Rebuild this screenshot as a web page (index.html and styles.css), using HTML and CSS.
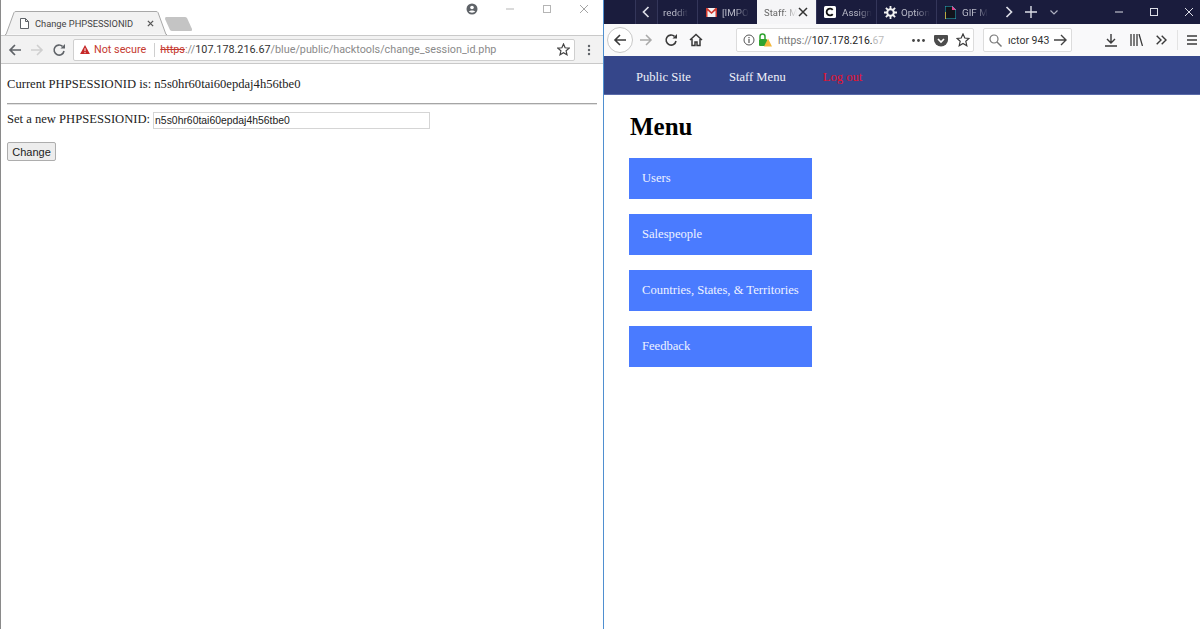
FILE: index.html
```html
<!DOCTYPE html>
<html lang="en">
<head>
    <meta charset="UTF-8">
    <meta name="viewport" content="width=device-width, initial-scale=1.0">
    <title>Change PHPSESSIONID</title>
    <link rel="stylesheet" href="styles.css">
</head>
<body>
    <div class="desktop">
        <!-- chrome window -->
        <section class="chrome">
            <div class="chrome-title">
                <div class="chrome-tab">
                    <svg class="tab-shape" width="162" height="24" viewBox="0 0 162 24"><path d="M0 23.500H1L9 1.500Q9.500 .5 11 .5H151Q152.500 .5 153 1.500L161 23.500H162" fill="#f2f2f2" stroke="#a8a8a8"/></svg>
                    <svg class="tab-doc" width="9" height="11" viewBox="0 0 9 11"><path d="M.5 .5H5.500L8.500 3.500V10.500H.5ZM5.500 .5V3.500H8.500" fill="#fff" stroke="#5f6368"/></svg>
                    <span class="tab-label">Change PHPSESSIONID</span>
                    <svg class="tab-x" width="7" height="7" viewBox="0 0 8 8"><path d="M1 1L7 7M7 1L1 7" stroke="#555" stroke-width="1.500"/></svg>
                </div>
                <svg class="ghost-tab" width="28" height="14" viewBox="0 0 28 14"><path d="M1 0H20Q21 0 22 1L27 12Q27.500 14 26 14H7Q6 14 5 13L0 2Q0 0 1 0Z" fill="#c4c4c4"/></svg>
                <div class="chrome-controls">
                    <svg class="profile" width="12" height="12" viewBox="0 0 12 12"><circle cx="6" cy="6" r="5.500" fill="#5f6368"/><circle cx="6" cy="4.500" r="1.800" fill="#fff"/><path d="M2.800 8.600C4 7 8 7 9.200 8.600C8 10 4 10 2.800 8.600Z" fill="#fff"/></svg>
                    <svg class="win-btn" width="10" height="10" viewBox="0 0 10 10"><path d="M1 5H9" stroke="#b5b5b5"/></svg>
                    <svg class="win-btn" width="10" height="10" viewBox="0 0 10 10"><rect x="1.500" y="1.500" width="7" height="7" fill="none" stroke="#b5b5b5"/></svg>
                    <svg class="win-btn" width="10" height="10" viewBox="0 0 10 10"><path d="M1 1L9 9M9 1L1 9" stroke="#a5a5a5"/></svg>
                </div>
            </div>
            <div class="chrome-bar">
                <svg width="14" height="14" viewBox="0 0 14 14"><path d="M13 7H2M7 2L2 7L7 12" fill="none" stroke="#5f6368" stroke-width="1.600"/></svg>
                <svg class="fwd" width="14" height="14" viewBox="0 0 14 14"><path d="M1 7H12M7 2L12 7L7 12" fill="none" stroke="#cfcfcf" stroke-width="1.600"/></svg>
                <svg class="reload" width="14" height="14" viewBox="0 0 14 14"><path d="M12 8A5 5 0 1 1 10.500 3.400" fill="none" stroke="#5f6368" stroke-width="1.600"/><path d="M8.500 5.500H13V1Z" fill="#5f6368"/></svg>
                <div class="chrome-omni">
                    <svg class="warn" width="10" height="9" viewBox="0 0 12 11"><path d="M6 0L12 11H0Z" fill="#c62828"/><path d="M6 4V7.500M6 8.500V10" stroke="#fff" stroke-width="1.200"/></svg>
                    <span class="not-secure">Not secure</span>
                    <span class="omni-sep"></span>
                    <span class="url"><s class="scheme">https</s><span class="url-dim">://</span>107.178.216.67<span class="url-dim">/blue/public/hacktools/change_session_id.php</span></span>
                    <svg class="omni-star" width="13" height="13" viewBox="0 0 13 13"><path d="M6.500 1L8.100 4.800L12.200 5.100L9.100 7.800L10 11.800L6.500 9.700L3 11.800L3.900 7.800L.8 5.100L4.900 4.800Z" fill="none" stroke="#444" stroke-width="1.200"/></svg>
                </div>
                <svg class="dots" width="4" height="12" viewBox="0 0 4 12"><circle cx="2" cy="2" r="1.200" fill="#5f6368"/><circle cx="2" cy="6" r="1.200" fill="#5f6368"/><circle cx="2" cy="10" r="1.200" fill="#5f6368"/></svg>
            </div>
            <div class="chrome-page">
                <p class="current">Current PHPSESSIONID is: n5s0hr60tai60epdaj4h56tbe0</p>
                <hr class="rule">
                <form class="session-form">
                    <div class="session-row">
                        <label for="session-id">Set a new PHPSESSIONID:</label>
                        <input type="text" id="session-id" value="n5s0hr60tai60epdaj4h56tbe0">
                    </div>
                    <button type="button" class="change-btn">Change</button>
                </form>
            </div>
        </section>

        <!-- firefox window -->
        <section class="firefox">
            <div class="ff-tabs">
                <div class="ff-tab ff-scroll">
                    <svg width="8" height="12" viewBox="0 0 8 12"><path d="M6.500 1L1.500 6L6.500 11" fill="none" stroke="#dcdde6" stroke-width="1.700"/></svg>
                </div>
                <div class="ff-tab ff-reddit"><span class="ff-fade">reddit</span></div>
                <div class="ff-tab ff-mail">
                    <svg width="11" height="9" viewBox="0 0 11 9"><rect width="11" height="9" fill="#f4f4f4"/><path d="M0 0H1.500L5.500 4L9.500 0H11V9H9.500V2.500L5.500 6L1.500 2.500V9H0Z" fill="#d0392e"/></svg>
                    <span class="ff-fade">[IMPO</span>
                </div>
                <div class="ff-tab ff-active">
                    <span class="active-label">Staff: M</span>
                    <svg width="10" height="10" viewBox="0 0 10 10"><path d="M1 1L9 9M9 1L1 9" stroke="#333" stroke-width="1.500"/></svg>
                </div>
                <div class="ff-tab ff-assign">
                    <svg width="12" height="12" viewBox="0 0 12 12"><rect width="12" height="12" rx="1.500" fill="#fff"/><path d="M8.700 3.900A3.400 3.400 0 1 0 8.700 8.100" fill="none" stroke="#111" stroke-width="1.800"/></svg>
                    <span class="ff-fade">Assign</span>
                </div>
                <div class="ff-tab ff-opt">
                    <svg width="13" height="13" viewBox="0 0 13 13"><circle cx="6.500" cy="6.500" r="3.300" fill="none" stroke="#f2f2f2" stroke-width="2"/><path d="M6.500 0V3M6.500 10V13M0 6.500H3M10 6.500H13M1.900 1.900L4 4M9 9L11.100 11.100M11.100 1.900L9 4M4 9L1.900 11.100" stroke="#f2f2f2" stroke-width="1.800"/></svg>
                    <span class="ff-fade">Option</span>
                </div>
                <div class="ff-tab ff-gif">
                    <svg width="11" height="13" viewBox="0 0 11 13"><path d="M0 0H7L11 4V13H0Z" fill="#12131c" stroke="#28b6c9"/><path d="M7 0L11 4H7Z" fill="#e8418b"/><path d="M0 13V6" stroke="#f0c330" stroke-width="1.500"/></svg>
                    <span class="ff-fade">GIF M</span>
                </div>
                <div class="ff-tabctl">
                    <svg width="8" height="12" viewBox="0 0 8 12"><path d="M1.500 1L6.500 6L1.500 11" fill="none" stroke="#dcdde6" stroke-width="1.700"/></svg>
                    <svg class="ff-plus" width="12" height="12" viewBox="0 0 12 12"><path d="M6 0V12M0 6H12" stroke="#dcdde6" stroke-width="1.400"/></svg>
                    <svg class="ff-more" width="8" height="5" viewBox="0 0 8 5"><path d="M.5 .5L4 4L7.500 .5" fill="none" stroke="#aeb0c0" stroke-width="1.200"/></svg>
                </div>
                <div class="ff-controls">
                    <svg width="10" height="10" viewBox="0 0 10 10"><path d="M1 5H9" stroke="#dcdde6"/></svg>
                    <svg width="10" height="10" viewBox="0 0 10 10"><rect x="1.500" y="1.500" width="7" height="7" fill="none" stroke="#dcdde6"/></svg>
                    <svg width="10" height="10" viewBox="0 0 10 10"><path d="M1 1L9 9M9 1L1 9" stroke="#dcdde6"/></svg>
                </div>
            </div>
            <div class="ff-bar">
                <span class="ff-back">
                    <svg width="14" height="14" viewBox="0 0 14 14"><path d="M13 7H2M7 2L2 7L7 12" fill="none" stroke="#3a3a3a" stroke-width="1.600"/></svg>
                </span>
                <svg class="ff-fwd" width="14" height="14" viewBox="0 0 14 14"><path d="M1 7H12M7 2L12 7L7 12" fill="none" stroke="#a9a9a9" stroke-width="1.500"/></svg>
                <svg class="ff-reload" width="14" height="14" viewBox="0 0 14 14"><path d="M12 8A5 5 0 1 1 10.500 3.400" fill="none" stroke="#3a3a3a" stroke-width="1.600"/><path d="M8.500 5.500H13V1Z" fill="#3a3a3a"/></svg>
                <svg class="ff-home" width="14" height="14" viewBox="0 0 14 14"><path d="M1 7L7 1.500L13 7M3 6V12.500H6V9H8V12.500H11V6" fill="none" stroke="#3a3a3a" stroke-width="1.500"/></svg>
                <div class="ff-url">
                    <svg width="12" height="12" viewBox="0 0 12 12"><circle cx="6" cy="6" r="5" fill="none" stroke="#555"/><path d="M6 5V9M6 3V4.200" stroke="#555" stroke-width="1.200"/></svg>
                    <svg class="ff-lock" width="13" height="14" viewBox="0 0 13 14"><path d="M1 6V3.500A2.500 2.500 0 0 1 6 3.500V6" fill="none" stroke="#2fa32f" stroke-width="1.500"/><rect x="0" y="6" width="8" height="7" rx="1" fill="#2fa32f"/><path d="M9 5.500L13 13.500H5Z" fill="#f3b73b"/></svg>
                    <span class="ff-address"><span class="ff-dim">https://</span>107.178.216.<span class="ff-dim2">67</span></span>
                    <svg class="ff-ellipsis" width="13" height="3" viewBox="0 0 13 3"><circle cx="1.500" cy="1.500" r="1.400" fill="#444"/><circle cx="6.500" cy="1.500" r="1.400" fill="#444"/><circle cx="11.500" cy="1.500" r="1.400" fill="#444"/></svg>
                    <svg class="ff-pocket" width="14" height="13" viewBox="0 0 14 13"><path d="M1 1H13Q14 1 14 2V6A7 6.500 0 0 1 0 6V2Q0 1 1 1Z" fill="#4c4c4c"/><path d="M4 5L7 8L10 5" fill="none" stroke="#fff" stroke-width="1.700"/></svg>
                    <svg class="ff-star" width="14" height="14" viewBox="0 0 14 14"><path d="M7 1L8.800 5L13 5.400L9.800 8.300L10.800 12.700L7 10.400L3.200 12.700L4.200 8.300L1 5.400L5.200 5Z" fill="none" stroke="#3a3a3a" stroke-width="1.200"/></svg>
                </div>
                <div class="ff-search">
                    <svg width="13" height="13" viewBox="0 0 13 13"><circle cx="5" cy="5" r="4" fill="none" stroke="#777" stroke-width="1.200"/><path d="M8 8L12.500 12.500" stroke="#777" stroke-width="1.400"/></svg>
                    <span class="ff-query">ıctor 943</span>
                    <svg class="ff-go" width="13" height="12" viewBox="0 0 13 12"><path d="M0 6H12M7 1L12 6L7 11" fill="none" stroke="#444" stroke-width="1.400"/></svg>
                </div>
                <div class="ff-tools">
                    <svg width="12" height="13" viewBox="0 0 12 13"><path d="M6 0V9M2 5L6 9L10 5M0 12H12" fill="none" stroke="#3a3a3a" stroke-width="1.400"/></svg>
                    <svg width="13" height="12" viewBox="0 0 13 12"><path d="M1 0V12M4 0V12M7 0V12M9 0L12.500 12" stroke="#3a3a3a" stroke-width="1.300"/></svg>
                    <svg width="11" height="10" viewBox="0 0 11 10"><path d="M.7 .7L5 5L.7 9.300M5.700 .7L10 5L5.700 9.300" fill="none" stroke="#3a3a3a" stroke-width="1.400"/></svg>
                    <span class="ff-sep"></span>
                    <svg width="10" height="10" viewBox="0 0 10 10"><path d="M0 1H10M0 5H10M0 9H10" stroke="#3a3a3a" stroke-width="1.300"/></svg>
                </div>
            </div>
            <nav class="site-nav">
                <a href="#">Public Site</a>
                <a href="#">Staff Menu</a>
                <a href="#" class="logout">Log out</a>
            </nav>
            <main class="site-main">
                <h1>Menu</h1>
                <ul class="menu-list">
                    <li><a href="#">Users</a></li>
                    <li><a href="#">Salespeople</a></li>
                    <li><a href="#">Countries, States, &amp; Territories</a></li>
                    <li><a href="#">Feedback</a></li>
                </ul>
            </main>
        </section>
    </div>
</body>
</html>
```

FILE: styles.css
```css
html, body {
    margin: 0;
    height: 100%;
    overflow: hidden;
}

svg {
    flex: none;
}

.desktop {
    display: flex;
    width: 1200px;
    height: 629px;
    background-color: #fff;
}

/* chrome window */

.chrome {
    width: 603px;
    flex: none;
    box-sizing: border-box;
    border-left: 1px solid #8a8a8a;
    display: flex;
    flex-direction: column;
    font-family: Roboto, "Noto Sans", sans-serif;
}

.chrome-title {
    height: 35px;
    display: flex;
    align-items: flex-end;
    padding-left: 4px;
    box-sizing: border-box;
}

.chrome-tab {
    position: relative;
    width: 162px;
    height: 24px;
    flex: none;
    display: flex;
    align-items: center;
    padding-left: 15px;
    box-sizing: border-box;
    font-size: 9.300px;
    color: #444;
}

.tab-shape {
    position: absolute;
    left: 0;
    top: 0;
}

.tab-doc, .tab-label, .tab-x {
    position: relative;
}

.tab-label {
    width: 106px;
    margin-left: 6px;
    white-space: nowrap;
}

.tab-x {
    margin-left: 6px;
}

.ghost-tab {
    margin: 0 0 4px -2px;
}

.chrome-controls {
    display: flex;
    align-items: center;
    align-self: flex-start;
    margin-left: auto;
    height: 18px;
}

.profile {
    margin-right: 27px;
}

.win-btn {
    margin-right: 27px;
}

.win-btn:last-child {
    margin-right: 14px;
}

.chrome-bar {
    height: 29px;
    background-color: #f2f2f2;
    border-top: 1px solid #c9c9c9;
    border-bottom: 1px solid #c9c9c9;
    box-sizing: border-box;
    display: flex;
    align-items: center;
    padding-left: 7px;
}

.fwd {
    margin-left: 8px;
}

.reload {
    margin-left: 8px;
}

.chrome-omni {
    width: 502px;
    height: 22px;
    box-sizing: border-box;
    margin-left: 7px;
    background-color: #fff;
    border: 1px solid #cfcfcf;
    border-radius: 2px;
    display: flex;
    align-items: center;
    padding-left: 6px;
    font-size: 10.800px;
    white-space: nowrap;
}

.not-secure {
    color: #c5392f;
    margin-left: 4px;
}

.omni-sep {
    width: 1px;
    height: 14px;
    background-color: #cfcfcf;
    margin: 0 5px 0 8px;
}

.url {
    color: #333;
}

.scheme {
    color: #c5392f;
}

.url-dim {
    color: #8a8a8a;
}

.omni-star {
    margin-left: auto;
    margin-right: 4px;
}

.dots {
    margin-left: 12px;
}

.chrome-page {
    padding: 12px 6px 0;
    font-family: "Liberation Serif", serif;
    font-size: 12.600px;
    color: #222;
}

.current {
    margin: 0;
    line-height: 16px;
}

.rule {
    margin: 11px 0 0;
    border: 0;
    border-top: 1px solid #a5a5a5;
    border-bottom: 1px solid #e2e2e2;
}

.session-row {
    display: flex;
    align-items: center;
    margin-top: 6px;
    height: 18px;
}

.session-row label {
    padding-bottom: 1px;
}

.session-row input {
    width: 277px;
    height: 17px;
    box-sizing: border-box;
    margin-left: 3px;
    padding: 0 1px;
    border: 1px solid #d5d5d5;
    font-family: "Liberation Sans", sans-serif;
    font-size: 10.400px;
    color: #222;
}

.change-btn {
    display: block;
    width: 49px;
    height: 19px;
    margin-top: 13px;
    padding: 0;
    border: 1px solid #adadad;
    border-radius: 2px;
    background-color: #ededed;
    font-family: "Liberation Sans", sans-serif;
    font-size: 11px;
    color: #222;
}

/* firefox window */

.firefox {
    flex: 1;
    border-left: 1px solid #4f8fd0;
    display: flex;
    flex-direction: column;
}

.ff-tabs {
    height: 24px;
    background-color: #1a1c3d;
    display: flex;
    font-family: Roboto, "Noto Sans", sans-serif;
    font-size: 9.800px;
    color: #c9cad6;
}

.ff-tab {
    display: flex;
    align-items: center;
    box-sizing: border-box;
    border-left: 1px solid #34365a;
    white-space: nowrap;
    flex: none;
}

.ff-scroll {
    width: 22px;
    margin-left: 31px;
    padding-left: 6px;
    background-color: #1f2040;
}

.ff-reddit {
    width: 40px;
    padding-left: 5px;
}

.ff-mail {
    width: 60px;
    padding-left: 8px;
}

.ff-mail span {
    margin-left: 5px;
}

.ff-active {
    width: 59px;
    padding-left: 7px;
    background-color: #f5f5f7;
    color: #666;
    border-left: 0;
    font-size: 9.500px;
}

.active-label {
    width: 33px;
    -webkit-mask-image: linear-gradient(to right, #000 60%, transparent);
    mask-image: linear-gradient(to right, #000 60%, transparent);
}

.active-label + svg {
    margin-left: 1px;
}

.ff-assign {
    width: 60px;
    padding-left: 7px;
}

.ff-assign span {
    margin-left: 6px;
}

.ff-opt {
    width: 60px;
    padding-left: 7px;
}

.ff-opt span {
    margin-left: 4px;
}

.ff-gif {
    width: 60px;
    padding-left: 8px;
}

.ff-gif span {
    margin-left: 6px;
}

.ff-fade {
    opacity: .9;
    -webkit-mask-image: linear-gradient(to right, #000 50%, transparent);
    mask-image: linear-gradient(to right, #000 50%, transparent);
}

.ff-tabctl {
    display: flex;
    align-items: center;
    padding-left: 9px;
}

.ff-plus {
    margin-left: 12px;
}

.ff-more {
    margin-left: 13px;
}

.ff-controls {
    display: flex;
    align-items: center;
    margin-left: auto;
    gap: 25px;
    padding-right: 6px;
}

.ff-bar {
    height: 32px;
    background-color: #f9f9fa;
    display: flex;
    align-items: center;
    padding-left: 3px;
    box-sizing: border-box;
    font-family: Roboto, "Noto Sans", sans-serif;
}

.ff-back {
    width: 26px;
    height: 26px;
    flex: none;
    box-sizing: border-box;
    border: 1px solid #c8c8c8;
    border-radius: 50%;
    background-color: #fff;
    display: flex;
    align-items: center;
    justify-content: center;
}

.ff-fwd {
    margin-left: 6px;
}

.ff-reload {
    margin-left: 11px;
}

.ff-home {
    margin-left: 11px;
}

.ff-url {
    width: 238px;
    height: 24px;
    flex: none;
    box-sizing: border-box;
    margin-left: 33px;
    background-color: #fff;
    border: 1px solid #dcdcdc;
    border-radius: 2px;
    display: flex;
    align-items: center;
    padding: 0 4px 0 6px;
    font-size: 10.400px;
}

.ff-lock {
    margin-left: 4px;
}

.ff-address {
    margin-left: 6px;
    color: #222;
    white-space: nowrap;
    width: 106px;
    flex: none;
}

.ff-dim {
    color: #777;
}

.ff-dim2 {
    color: #bbb;
}

.ff-ellipsis {
    margin-left: 28px;
}

.ff-pocket {
    margin-left: 9px;
}

.ff-star {
    margin-left: 8px;
}

.ff-search {
    width: 89px;
    height: 24px;
    flex: none;
    box-sizing: border-box;
    margin-left: 9px;
    background-color: #fff;
    border: 1px solid #dcdcdc;
    border-radius: 2px;
    display: flex;
    align-items: center;
    padding: 0 4px 0 5px;
    font-size: 10.500px;
    color: #333;
}

.ff-query {
    margin-left: 6px;
    white-space: nowrap;
}

.ff-go {
    margin-left: auto;
}

.ff-tools {
    display: flex;
    align-items: center;
    margin-left: 33px;
    gap: 13px;
}

.ff-sep {
    width: 1px;
    height: 20px;
    background-color: #e3e3e3;
    margin: 0 -4px 0 -3px;
}

.site-nav {
    height: 39px;
    background-color: #35468a;
    border-bottom: 1px solid #5a6aa8;
    box-sizing: border-box;
    display: flex;
    align-items: center;
    padding: 4px 0 0 32px;
    gap: 38px;
    font-family: "Liberation Serif", serif;
    font-size: 12.600px;
}

.site-nav a {
    color: #eef0f8;
    text-decoration: none;
}

.site-nav .logout {
    color: #e8112d;
    margin-left: -1px;
}

.site-main {
    padding: 18px 0 0 25px;
    font-family: "Liberation Serif", serif;
}

.site-main h1 {
    margin: 0;
    padding-left: 1px;
    font-size: 25px;
    line-height: 28px;
    color: #000;
}

.menu-list {
    list-style: none;
    margin: 17px 0 0;
    padding: 0;
    width: 183px;
}

.menu-list li {
    margin-bottom: 15px;
}

.menu-list a {
    display: block;
    height: 41px;
    line-height: 41px;
    padding-left: 13px;
    background-color: #4a7bff;
    color: #eef2ff;
    font-size: 12.600px;
    text-decoration: none;
    white-space: nowrap;
}
```
